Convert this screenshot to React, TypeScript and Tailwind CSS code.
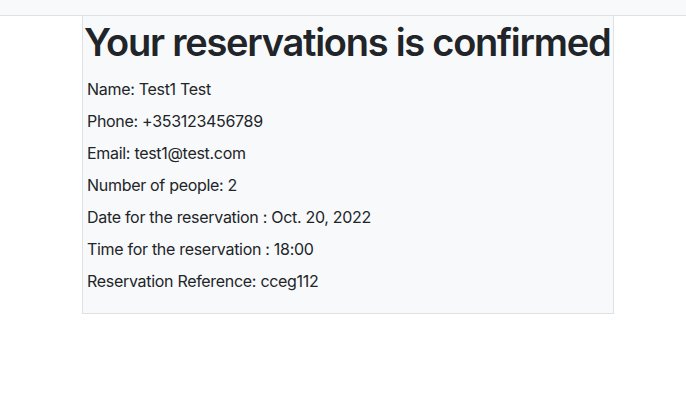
export default function App() {
  const lines = [
    "Name: Test1 Test",
    "Phone: +353123456789",
    "Email: test1@test.com",
    "Number of people: 2",
    "Date for the reservation : Oct. 20, 2022",
    "Time for the reservation : 18:00",
    "Reservation Reference: cceg112",
  ];
  return (
    <div className="min-h-[400px] w-full bg-white text-[#212529]" style={{ fontFamily: "Inter, 'Noto Sans', sans-serif" }}>
      <div className="h-[16px] w-full border-b border-[#dee2e6] bg-[#f8f9fa]" />
      <div className="ml-[82px] w-[532px] border border-t-0 border-[#dee2e6] bg-[#f8f9fa] pb-[20px]">
        <h1 className="whitespace-nowrap pl-[1px] text-[38px] font-semibold leading-[52px] tracking-[-1.25px]">
          Your reservations is confirmed
        </h1>
        <div className="mt-[9px] flex flex-col gap-[8px] pl-[4px]">
          {lines.map((l) => (
            <p key={l} className="text-[16px] leading-[24px] tracking-[-0.3px]">{l}</p>
          ))}
        </div>
      </div>
    </div>
  );
}
